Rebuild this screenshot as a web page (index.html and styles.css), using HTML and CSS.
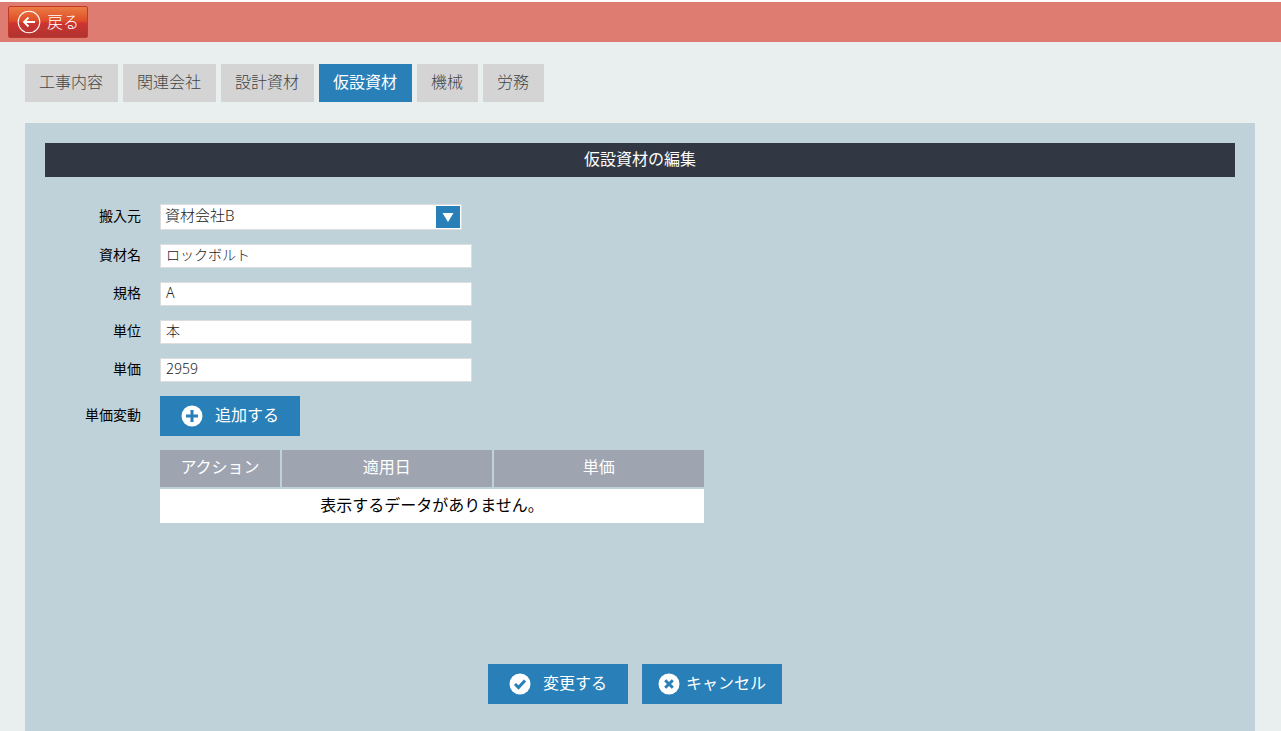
FILE: index.html
```
<!DOCTYPE html>
<html lang="ja">
<head>
<meta charset="utf-8">
<meta name="viewport" content="width=device-width, initial-scale=1">
<title>仮設資材の編集</title>
<link rel="stylesheet" href="styles.css">
</head>
<body>
<header class="topbar">
  <button type="button" class="back">
    <svg class="back-icon" viewBox="0 0 24 24" aria-hidden="true"><circle cx="12" cy="12" r="10.8"/><path d="M18 12H7M11.500 7.500L7 12l4.500 4.500"/></svg>
    戻る
  </button>
</header>
<nav class="tabs">
  <a class="tab" href="#work">工事内容</a>
  <a class="tab" href="#companies">関連会社</a>
  <a class="tab" href="#design">設計資材</a>
  <a class="tab tab-active" href="#temporary" aria-current="page">仮設資材</a>
  <a class="tab" href="#machines">機械</a>
  <a class="tab" href="#labor">労務</a>
</nav>
<main class="panel">
  <h1 class="title">仮設資材の編集</h1>
  <form>
    <div class="fields">
      <label class="label" for="source">搬入元</label>
      <div class="select-box">
        <select class="select" id="source"><option>資材会社B</option></select>
        <svg class="select-arrow" viewBox="0 0 24 22" aria-hidden="true"><path d="M6.500 7h11L12 16z"/></svg>
      </div>
      <label class="label" for="name">資材名</label>
      <input class="input" id="name" type="text" value="ロックボルト">
      <label class="label" for="spec">規格</label>
      <input class="input" id="spec" type="text" value="A">
      <label class="label" for="unit">単位</label>
      <input class="input" id="unit" type="text" value="本">
      <label class="label" for="price">単価</label>
      <input class="input" id="price" type="text" value="2959">
      <span class="label" id="changes">単価変動</span>
      <button type="button" class="button" aria-describedby="changes">
        <svg class="icon" viewBox="0 0 22 22" aria-hidden="true"><circle cx="11" cy="11" r="10.500"/><path d="M11 5v12M5 11h12"/></svg>
        追加する
      </button>
      <table class="table" aria-labelledby="changes">
        <thead><tr><th class="col-action">アクション</th><th>適用日</th><th>単価</th></tr></thead>
        <tbody><tr><td colspan="3">表示するデータがありません。</td></tr></tbody>
      </table>
    </div>
    <div class="actions">
      <button type="submit" class="button">
        <svg class="icon" viewBox="0 0 22 22" aria-hidden="true"><circle cx="11" cy="11" r="10.500"/><path d="M6 11l3.500 3.500L16 7.500"/></svg>
        変更する
      </button>
      <button type="button" class="button button-tight">
        <svg class="icon" viewBox="0 0 22 22" aria-hidden="true"><circle cx="11" cy="11" r="10.500"/><path d="M7.200 7.200l7.600 7.600M14.800 7.200l-7.600 7.600"/></svg>
        キャンセル
      </button>
    </div>
  </form>
</main>
</body>
</html>
```
FILE: styles.css
```
* {
  box-sizing: border-box;
}

body {
  display: flex;
  flex-direction: column;
  min-height: 100vh;
  margin: 0;
  border-top: 2px solid #fff;
  background: #e9eeee;
  color: #000;
  font: 16px/24px "Noto Sans", "Noto Sans CJK JP", sans-serif;
}

button,
input,
select {
  font-family: inherit;
}

.topbar {
  display: flex;
  padding: 4px 8px;
  background: #df7c71;
}

.back {
  display: flex;
  align-items: center;
  gap: 6px;
  height: 32px;
  padding: 0 8px 1px;
  border: 1px solid #c0392b;
  border-radius: 2px;
  background: linear-gradient(#ea7c44, #e04e28 45%, #cb3530 55%, #b13331);
  color: #fff;
  font-size: 16px;
  font-weight: 300;
  line-height: 24px;
}

.back-icon {
  width: 24px;
  height: 24px;
  fill: none;
  stroke: #fff;
  stroke-width: 1.1;
}

.back-icon path {
  stroke-width: 1.8;
}

.tabs {
  display: flex;
  flex-wrap: wrap;
  gap: 5px;
  padding: 22px 25px 21px;
}

.tab {
  padding: 6px 15px 8px 14px;
  background: #d4d4d4;
  color: #444;
  font-weight: 300;
  text-decoration: none;
}

.tab-active {
  background: #2980b9;
  color: #fff;
  font-weight: 400;
}

.panel {
  flex: 1;
  margin: 0 26px 0 25px;
  padding: 20px 20px 27px;
  background: #c0d2d9;
}

.title {
  margin: 0 0 27px;
  padding: 4px 0 6px;
  background: #323843;
  color: #fff;
  font-size: 16px;
  font-weight: 400;
  text-align: center;
}

.fields {
  display: grid;
  grid-template-columns: 96px 1fr;
  gap: 14px 19px;
  align-items: center;
  justify-items: start;
}

.label {
  justify-self: end;
  padding-bottom: 2px;
  font-size: 14px;
  line-height: 20px;
}

.select-box {
  position: relative;
  width: 302px;
  max-width: 100%;
}

.select,
.input {
  display: block;
  border: 1px solid #ddd;
  border-radius: 0;
  background: #fff;
  color: #222;
  font-weight: 300;
}

.select {
  width: 100%;
  height: 26px;
  padding: 0 30px 4px 4px;
  appearance: none;
  font-size: 15px;
}

.select-arrow {
  position: absolute;
  top: 2px;
  right: 2px;
  width: 24px;
  height: 22px;
  background: #2980b9;
  fill: #fff;
  pointer-events: none;
}

.input {
  width: 312px;
  max-width: 100%;
  height: 24px;
  padding: 0 5px 4px;
  font-size: 14px;
}

.button {
  display: flex;
  align-items: center;
  justify-content: center;
  gap: 12px;
  width: 140px;
  height: 40px;
  padding: 0 0 2px;
  border: 0;
  background: #2980b9;
  color: #fff;
  font-size: 16px;
  line-height: 24px;
}

.button-tight {
  gap: 6px;
}

.icon {
  width: 22px;
  height: 22px;
  margin-top: 2px;
  fill: #fff;
}

.icon path {
  fill: none;
  stroke: #2980b9;
  stroke-width: 3;
}

.table {
  grid-column: 2;
  width: 544px;
  max-width: 100%;
  border-collapse: collapse;
  table-layout: fixed;
}

.table th {
  padding: 5px 0 8px;
  border-left: 2px solid #c0d2d9;
  background: #9ea5b0;
  color: #fff;
  font-weight: 400;
}

.table th:first-child {
  border-left: 0;
}

.table .col-action {
  width: 121px;
}

.table td {
  padding: 4px 0 6px;
  border-top: 2px solid #c0d2d9;
  background: #fff;
  text-align: center;
}

.actions {
  display: flex;
  justify-content: center;
  gap: 14px;
  margin-top: 141px;
  padding-right: 10px;
}
```
